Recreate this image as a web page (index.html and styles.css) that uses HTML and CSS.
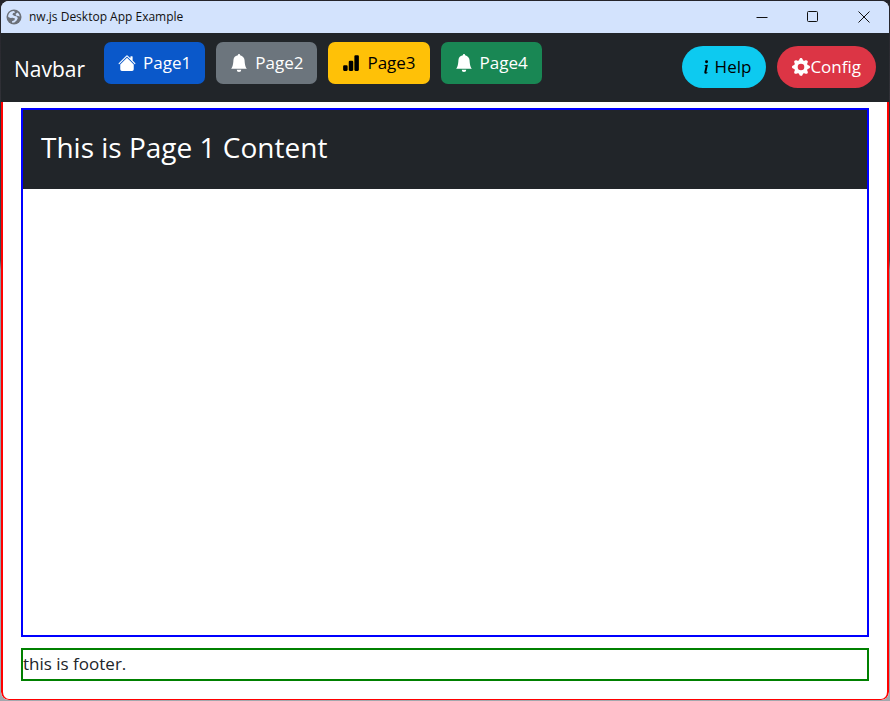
FILE: index.html
```html
<!DOCTYPE html>
<html lang="en">
<head>
<meta charset="utf-8">
<title>nw.js Desktop App Example</title>
<link rel="stylesheet" href="styles.css">
</head>
<body>
<div class="window">
  <header class="titlebar">
    <svg class="app-icon" viewBox="0 0 16 16" aria-hidden="true"><circle cx="8" cy="8" r="7.5" fill="#6b7078"/><path d="M2.2 6.2C3 3.6 5.2 2 8 2L9.2 3.4 7.2 4 6.4 5.6 8 6.8 11 7.4 11.8 9.2 10.6 11.4 8.4 13.6 6.2 13.8 6 12.2 8.4 11.2 9 9.6 6.6 8.8 4.6 9 2.2 8z" fill="#d3e3fd"/><path d="M9.6 5 11.4 3.6 13 5 13.8 7.4 12 7 10 6.4z" fill="#d3e3fd"/></svg>
    <span class="title">nw.js Desktop App Example</span>
    <div class="controls">
      <button type="button" class="control" aria-label="Minimize"><svg viewBox="0 0 12 12"><path d="M.5 6.5h11"/></svg></button>
      <button type="button" class="control" aria-label="Maximize"><svg viewBox="0 0 12 12"><rect x=".5" y=".5" width="10" height="10" rx="1"/></svg></button>
      <button type="button" class="control" aria-label="Close"><svg viewBox="0 0 12 12"><path d="M.5.5l11 11M11.5.5l-11 11"/></svg></button>
    </div>
  </header>
  <nav class="navbar">
    <a class="brand" href="#">Navbar</a>
    <div class="pages">
      <button type="button" class="btn primary"><svg class="icon" viewBox="0 0 16 16"><path d="M8.707 1.5a1 1 0 0 0-1.414 0L.646 8.146a.5.5 0 0 0 .708.708L8 2.207l6.646 6.647a.5.5 0 0 0 .708-.708L13 5.793V2.5a.5.5 0 0 0-.5-.5h-1a.5.5 0 0 0-.5.5v1.293z"/><path d="m8 3.293 6 6V13.5a1.5 1.5 0 0 1-1.5 1.5h-9A1.5 1.5 0 0 1 2 13.5V9.293z"/></svg>Page1</button>
      <button type="button" class="btn secondary"><svg class="icon" viewBox="0 0 16 16"><path d="M8 16a2 2 0 0 0 2-2H6a2 2 0 0 0 2 2m.995-14.901a1 1 0 1 0-1.99 0A5 5 0 0 0 3 6c0 1.098-.5 6-2 7h14c-1.5-1-2-5.902-2-7 0-2.42-1.72-4.44-4.005-4.901"/></svg>Page2</button>
      <button type="button" class="btn warning"><svg class="icon" viewBox="0 0 16 16"><path d="M1 11a1 1 0 0 1 1-1h2a1 1 0 0 1 1 1v3a1 1 0 0 1-1 1H2a1 1 0 0 1-1-1zm5-4a1 1 0 0 1 1-1h2a1 1 0 0 1 1 1v7a1 1 0 0 1-1 1H7a1 1 0 0 1-1-1zm5-5a1 1 0 0 1 1-1h2a1 1 0 0 1 1 1v12a1 1 0 0 1-1 1h-2a1 1 0 0 1-1-1z"/></svg>Page3</button>
      <button type="button" class="btn success"><svg class="icon" viewBox="0 0 16 16"><path d="M8 16a2 2 0 0 0 2-2H6a2 2 0 0 0 2 2m.995-14.901a1 1 0 1 0-1.99 0A5 5 0 0 0 3 6c0 1.098-.5 6-2 7h14c-1.5-1-2-5.902-2-7 0-2.42-1.72-4.44-4.005-4.901"/></svg>Page4</button>
    </div>
    <div class="tools">
      <button type="button" class="btn pill info"><svg class="icon" viewBox="0 0 16 16"><path d="m9.708 6.075-3.024.379-.108.502.595.108c.387.093.464.232.38.619l-.975 4.577c-.255 1.183.14 1.74 1.067 1.74.72 0 1.554-.332 1.933-.789l.116-.549c-.263.232-.65.325-.905.325-.363 0-.494-.255-.402-.704zm.091-2.755a1.32 1.32 0 1 1-2.64 0 1.32 1.32 0 0 1 2.64 0"/></svg>Help</button>
      <button type="button" class="btn pill danger"><svg class="icon" viewBox="0 0 16 16"><path d="M9.405 1.05c-.413-1.4-2.397-1.4-2.81 0l-.1.34a1.464 1.464 0 0 1-2.105.872l-.31-.17c-1.283-.698-2.686.705-1.987 1.987l.169.311c.446.82.023 1.841-.872 2.105l-.34.1c-1.4.413-1.4 2.397 0 2.81l.34.1a1.464 1.464 0 0 1 .872 2.105l-.17.31c-.698 1.283.705 2.686 1.987 1.987l.311-.169a1.464 1.464 0 0 1 2.105.872l.1.34c.413 1.4 2.397 1.4 2.81 0l.1-.34a1.464 1.464 0 0 1 2.105-.872l.31.17c1.283.698 2.686-.705 1.987-1.987l-.169-.311a1.464 1.464 0 0 1 .872-2.105l.34-.1c1.4-.413 1.4-2.397 0-2.81l-.34-.1a1.464 1.464 0 0 1-.872-2.105l.17-.31c.698-1.283-.705-2.686-1.987-1.987l-.311.169a1.464 1.464 0 0 1-2.105-.872zM8 10.93a2.929 2.929 0 1 1 0-5.86 2.929 2.929 0 0 1 0 5.858z"/></svg>Config</button>
    </div>
  </nav>
  <div class="body">
    <main class="content">
      <h1 class="heading">This is Page 1 Content</h1>
    </main>
    <footer class="footer">this is footer.</footer>
  </div>
</div>
</body>
</html>
```
FILE: styles.css
```css
* { box-sizing: border-box; }

body {
  margin: 0;
  min-height: 100vh;
  padding: 1px;
  display: flex;
  background: linear-gradient(#24242a 0, #45464c 260px, #8c939c 270px, #a2a8ae 100%);
  font-family: "Open Sans", "Noto Sans", sans-serif;
  font-size: 17px;
  line-height: 28px;
  color: #212529;
}

.window {
  flex: 1;
  display: flex;
  flex-direction: column;
  border-radius: 8px;
  overflow: hidden;
  background: #fff;
}

.titlebar {
  display: flex;
  align-items: center;
  height: 32px;
  padding-left: 5px;
  background: #d3e3fd;
  color: #111;
  font-size: 12px;
}

.app-icon { width: 16px; height: 16px; margin-right: 7px; }

.controls { display: flex; margin-left: auto; height: 100%; }

.control {
  display: flex;
  align-items: center;
  justify-content: center;
  width: 51px;
  padding: 0;
  border: 0;
  background: none;
}

.control svg { width: 12px; height: 12px; fill: none; stroke: #111; }

.navbar {
  display: flex;
  align-items: flex-start;
  height: 69px;
  padding: 0 13px;
  background: #212529;
}

.brand {
  margin-right: 19px;
  padding-top: 22px;
  color: #fff;
  font-size: 21px;
  text-decoration: none;
}

.pages { display: flex; gap: 11px; padding-top: 9px; }
.tools { display: flex; gap: 11px; margin-left: auto; padding-top: 13px; }

.btn {
  display: flex;
  align-items: center;
  height: 42px;
  padding: 0 14px;
  border: 0;
  border-radius: 7px;
  color: #fff;
  font: inherit;
  white-space: nowrap;
}

.icon { width: 18px; height: 18px; margin-right: 7px; fill: currentColor; }

.primary { background: #0a58ca; }
.secondary { background: #6c757d; }
.warning { background: #ffc107; color: #000; }
.success { background: #198754; }
.pill { padding: 0 15px; border-radius: 21px; }
.pill .icon { margin-right: 0; }
.info { background: #0dcaf0; color: #000; }
.danger { background: #dc3545; }

.body {
  flex: 1;
  display: flex;
  flex-direction: column;
  padding: 6px 18px 18px;
  border: 2px solid #f00;
  border-top: 0;
  border-bottom-width: 1px;
  border-radius: 0 0 8px 8px;
}

.content { flex: 1; border: 2px solid #00f; }

.heading {
  margin: 0;
  padding: 19px 18px 24px;
  background: #212529;
  color: #fff;
  font-size: 28px;
  font-weight: 400;
  line-height: 36px;
}

.footer { margin-top: 11px; border: 2px solid #008000; height: 33px; }
```
